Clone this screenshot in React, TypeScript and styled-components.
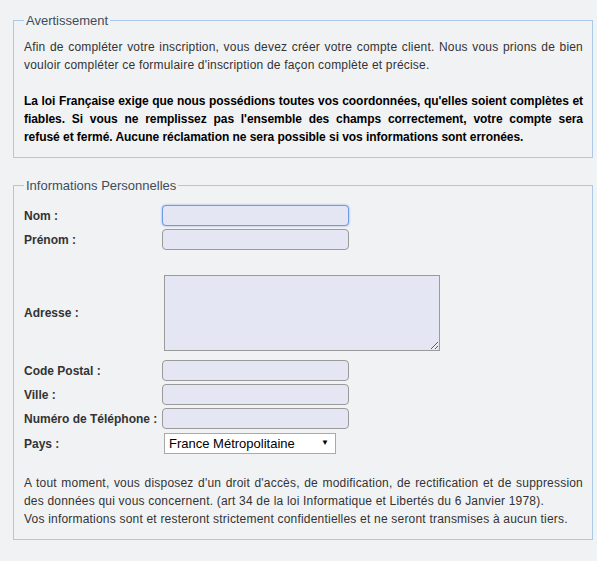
import React from "react";
import styled, { createGlobalStyle } from "styled-components";

const Global = createGlobalStyle`
  html, body { margin: 0; padding: 0; background: #f1f2f4; }
  body { font-family: "Liberation Sans", Arial, sans-serif; }
`;

const Page = styled.div`
  padding: 13px 0 0 13px;
  width: 580px;
`;

const Box = styled.fieldset<{ $mt?: number }>`
  box-sizing: border-box;
  width: 580px;
  margin: ${(p) => p.$mt ?? 0}px 0 0 0;
  padding: 10px 9px 11px 10px;
  border: 1px solid #a8c9ea;
  min-inline-size: 0;
`;

const Legend = styled.legend`
  padding: 0 2px;
  font-size: 13px;
  line-height: 15px;
  color: #3f4c5a;
`;

const Para = styled.p<{ $bold?: boolean; $mt?: number }>`
  margin: ${(p) => p.$mt ?? 0}px 0 0 0;
  font-size: 12px;
  line-height: 18px;
  text-align: justify;
  color: ${(p) => (p.$bold ? "#000" : "#333")};
  font-weight: ${(p) => (p.$bold ? "bold" : "normal")};
  letter-spacing: ${(p) => (p.$bold ? "-0.05px" : "0.2px")};
`;

const Rows = styled.div`
  display: flex;
  flex-direction: column;
  gap: 3px;
  padding-top: 2px;
`;

const Row = styled.div<{ $mt?: number; $mb?: number }>`
  display: flex;
  align-items: center;
  margin: ${(p) => p.$mt ?? 0}px 0 ${(p) => p.$mb ?? 0}px 0;
`;

const Label = styled.label`
  width: 138px;
  flex: none;
  font-size: 12px;
  font-weight: bold;
  color: #333;
`;

const Input = styled.input<{ $focused?: boolean }>`
  box-sizing: border-box;
  width: 187px;
  height: 21px;
  margin: 0;
  padding: 0 4px;
  background: #e4e6f3;
  border: 1px solid ${(p) => (p.$focused ? "#6f9be6" : "#9a9a9a")};
  border-radius: 4px;
  box-shadow: ${(p) => (p.$focused ? "0 0 2px rgba(90,140,230,0.8)" : "none")};
  outline: none;
  font-family: "Liberation Sans", Arial, sans-serif;
  font-size: 12px;
`;

const Area = styled.textarea`
  box-sizing: border-box;
  width: 276px;
  height: 76px;
  margin: 0 0 0 2px;
  padding: 2px;
  background: #e4e6f3;
  border: 1px solid #9a9a9a;
  border-radius: 0;
  outline: none;
  font-family: "Liberation Sans", Arial, sans-serif;
  font-size: 12px;
`;

const SelectWrap = styled.div`
  position: relative;
  margin-left: 2px;
  width: 172px;
  height: 21px;
`;

const Select = styled.select`
  box-sizing: border-box;
  appearance: none;
  -webkit-appearance: none;
  width: 172px;
  height: 21px;
  margin: 0;
  padding: 0 0 0 4px;
  background: #fff;
  border: 1px solid #a9a9a9;
  border-radius: 0;
  outline: none;
  color: #000;
  font-family: "Liberation Sans", Arial, sans-serif;
  font-size: 13px;
`;

const Arrow = styled.span`
  position: absolute;
  right: 7px;
  top: 5px;
  font-size: 8px;
  line-height: 10px;
  color: #000;
  pointer-events: none;
`;

export default function App() {
  return (
    <>
      <Global />
      <Page>
        <Box>
          <Legend>Avertissement</Legend>
          <Para>
            Afin de compléter votre inscription, vous devez créer votre compte client. Nous vous prions de bien
            vouloir compléter ce formulaire d'inscription de façon complète et précise.
          </Para>
          <Para $bold $mt={18}>
            La loi Française exige que nous possédions toutes vos coordonnées, qu'elles soient complètes et
            fiables. Si vous ne remplissez pas l'ensemble des champs correctement, votre compte sera{" "}
            {"refusé\u00A0et"} fermé. Aucune réclamation ne sera possible si vos informations sont erronées.
          </Para>
        </Box>
        <Box $mt={20}>
          <Legend>Informations Personnelles</Legend>
          <Rows>
            <Row>
              <Label>Nom :</Label>
              <Input $focused />
            </Row>
            <Row>
              <Label>Prénom :</Label>
              <Input />
            </Row>
            <Row $mt={22} $mb={6}>
              <Label>Adresse :</Label>
              <Area />
            </Row>
            <Row>
              <Label>Code Postal :</Label>
              <Input />
            </Row>
            <Row>
              <Label>Ville :</Label>
              <Input />
            </Row>
            <Row>
              <Label>Numéro de Téléphone :</Label>
              <Input />
            </Row>
            <Row $mt={1}>
              <Label>Pays :</Label>
              <SelectWrap>
                <Select defaultValue="fr">
                  <option value="fr">France Métropolitaine</option>
                </Select>
                <Arrow>▼</Arrow>
              </SelectWrap>
            </Row>
          </Rows>
          <Para $mt={20}>
            A tout moment, vous disposez d'un droit d'accès, de modification, de rectification et de suppression
            des données qui vous concernent. (art 34 de la loi Informatique et Libertés du 6 Janvier 1978).
            <br />
            Vos informations sont et resteront strictement confidentielles et ne seront transmises à aucun tiers.
          </Para>
        </Box>
      </Page>
    </>
  );
}
